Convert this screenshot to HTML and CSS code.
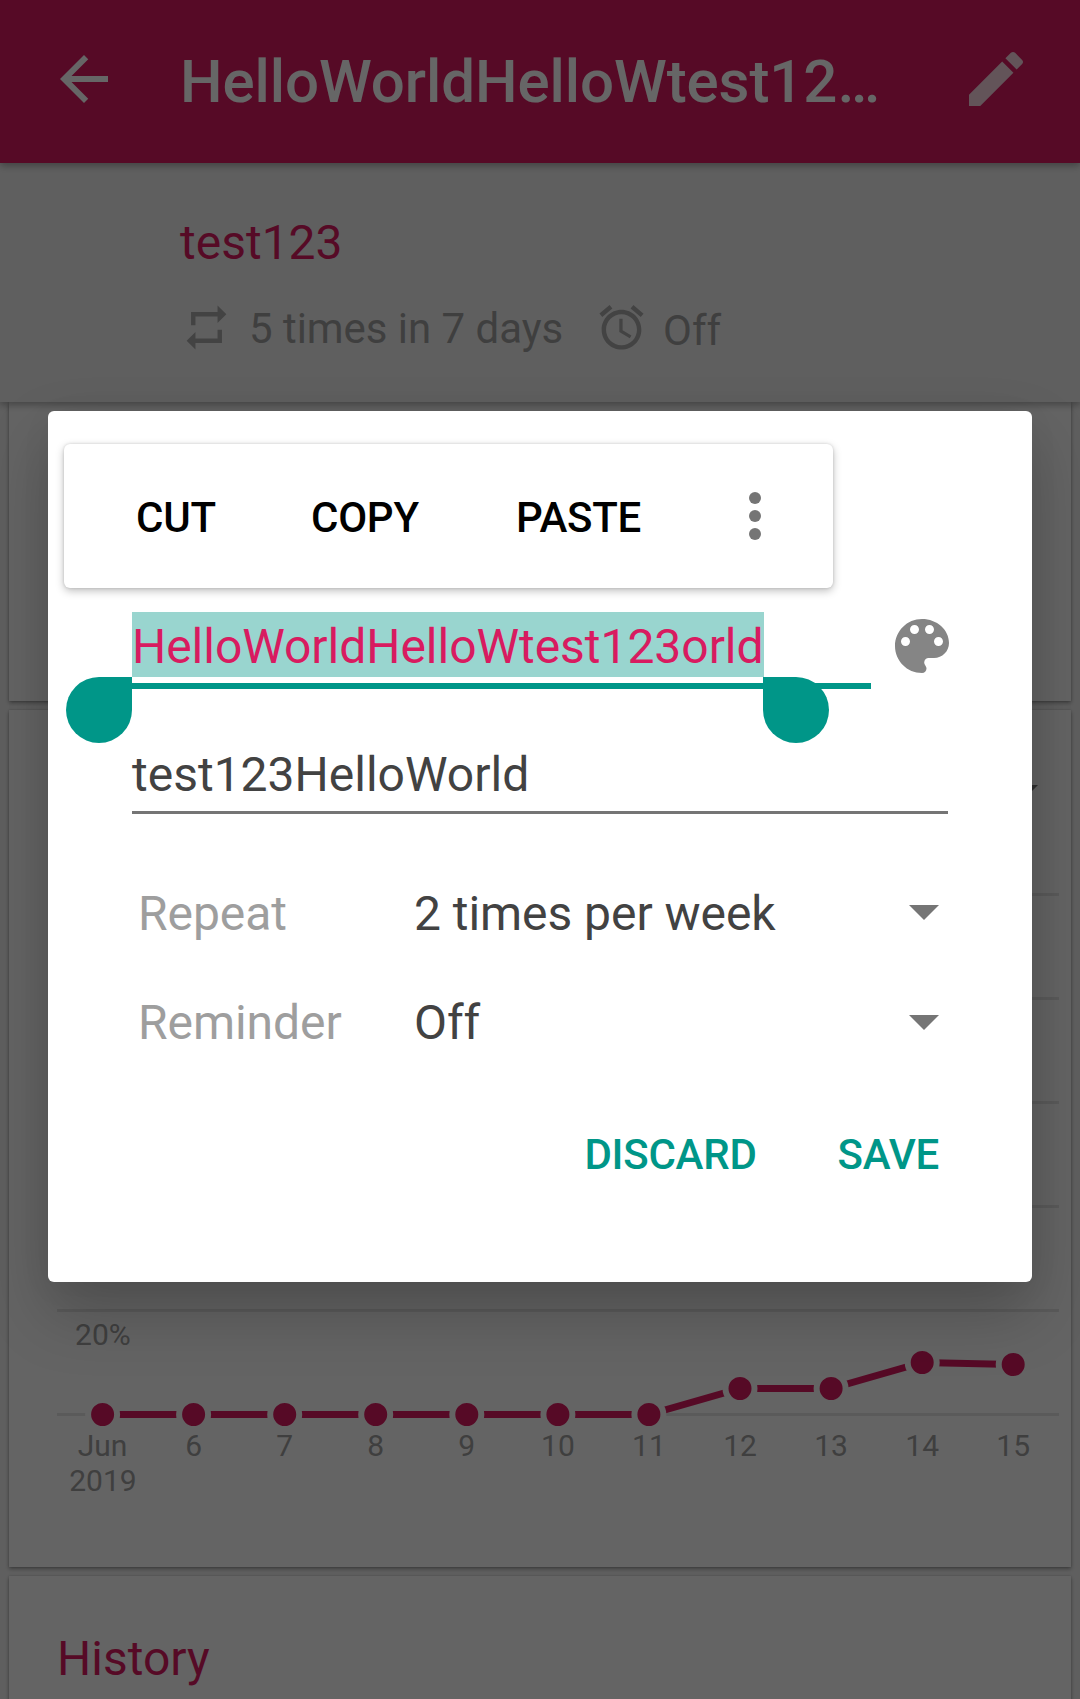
FILE: index.html
```html
<!DOCTYPE html>
<html lang="en">
<head>
<meta charset="utf-8">
<title>Habit details</title>
<link rel="stylesheet" href="styles.css">
</head>
<body>
<div class="screen">
  <header class="app-bar">
    <svg class="bar-icon" viewBox="0 0 24 24"><path d="M20 11H7.83l5.59-5.59L12 4l-8 8 8 8 1.41-1.41L7.83 13H20v-2z"/></svg>
    <h1 class="bar-title">HelloWorldHelloWtest12…</h1>
    <svg class="bar-icon bar-edit" viewBox="0 0 24 24"><path d="M3 17.25V21h3.75L17.81 9.94l-3.75-3.75L3 17.25zM20.71 7.04c.39-.39.39-1.02 0-1.41l-2.34-2.34c-.39-.39-1.02-.39-1.41 0l-1.83 1.83 3.75 3.75 1.83-1.83z"/></svg>
  </header>
  <section class="summary">
    <p class="question">test123</p>
    <div class="meta">
      <svg class="meta-icon" viewBox="0 0 24 24"><path d="M7 7h10v3l4-4-4-4v3H5v6h2V7zm10 10H7v-3l-4 4 4 4v-3h12v-6h-2v4z"/></svg>
      <span class="frequency">5 times in 7 days</span>
      <svg class="meta-icon" viewBox="0 0 24 24"><path d="M22 5.72l-4.6-3.86-1.29 1.53 4.6 3.86L22 5.72zM7.88 3.39L6.6 1.86 2 5.71l1.29 1.53 4.59-3.85zM12.5 8H11v6l4.75 2.85.75-1.23-4-2.37V8zM12 4c-4.97 0-9 4.03-9 9s4.02 9 9 9c4.97 0 9-4.03 9-9s-4.03-9-9-9zm0 16c-3.87 0-7-3.13-7-7s3.13-7 7-7 7 3.13 7 7-3.13 7-7 7z"/></svg>
      <span class="alarm">Off</span>
    </div>
  </section>
  <main class="cards">
    <section class="card card-overview"></section>
    <section class="card card-score">
      <div class="card-spinner"><span class="caret"></span></div>
      <svg class="chart" viewBox="9 880 1062 640">
        <g class="grid">
          <path d="M57 894.500H1059M57 998.500H1059M57 1102.500H1059M57 1206.500H1059M57 1310.500H1059M57 1414.500H1059"/>
        </g>
        <polyline class="trend" points="102.6,1414.5 193.6,1414.5 284.7,1414.5 375.7,1414.5 466.8,1414.5 557.9,1414.5 648.9,1414.5 740,1388.5 831.1,1388.5 922.2,1362.5 1013.2,1364.5"/>
        <g class="points">
          <circle cx="102.6" cy="1414.5" r="14.5"/><circle cx="193.6" cy="1414.5" r="14.5"/><circle cx="284.7" cy="1414.5" r="14.5"/><circle cx="375.7" cy="1414.5" r="14.5"/><circle cx="466.8" cy="1414.5" r="14.5"/><circle cx="557.9" cy="1414.5" r="14.5"/><circle cx="648.9" cy="1414.5" r="14.5"/><circle cx="740" cy="1388.5" r="14.5"/><circle cx="831.1" cy="1388.5" r="14.5"/><circle cx="922.2" cy="1362.5" r="14.5"/><circle cx="1013.2" cy="1364.5" r="14.5"/>
        </g>
        <g class="labels">
          <text x="102.9" y="1345">20%</text>
          <text x="102.6" y="1456">Jun</text><text x="102.9" y="1491">2019</text>
          <text x="193.6" y="1456">6</text><text x="284.7" y="1456">7</text><text x="375.7" y="1456">8</text><text x="466.8" y="1456">9</text><text x="557.9" y="1456">10</text><text x="648.9" y="1456">11</text><text x="740" y="1456">12</text><text x="831.1" y="1456">13</text><text x="922.2" y="1456">14</text><text x="1013.2" y="1456">15</text>
        </g>
      </svg>
    </section>
    <section class="card card-history"><h2 class="card-title">History</h2></section>
  </main>

  <div class="scrim">
    <div class="dialog">
      <div class="name-row">
        <div class="name-field">
          <span class="selection">HelloWorldHelloWtest123orld<i class="handle handle-start"></i><i class="handle handle-end"></i></span>
        </div>
        <svg class="palette" viewBox="0 0 24 24"><path d="M12 3c-4.97 0-9 4.03-9 9s4.03 9 9 9c.83 0 1.5-.67 1.5-1.5 0-.39-.15-.74-.39-1.01-.23-.26-.38-.61-.38-.99 0-.83.67-1.5 1.5-1.5H16c2.76 0 5-2.24 5-5 0-4.42-4.03-8-9-8zm-5.5 9c-.83 0-1.500-.67-1.500-1.500S5.670 9 6.500 9 8 9.670 8 10.500 7.330 12 6.500 12zm3-4C8.670 8 8 7.330 8 6.500S8.670 5 9.500 5s1.500.67 1.500 1.500S10.330 8 9.500 8zm5 0c-.83 0-1.500-.67-1.500-1.500S13.670 5 14.500 5s1.500.67 1.500 1.500S15.330 8 14.500 8zm3 4c-.83 0-1.500-.67-1.500-1.500S16.670 9 17.500 9s1.500.67 1.500 1.500-.67 1.500-1.500 1.500z"/></svg>
      </div>
      <div class="question-field">test123HelloWorld</div>
      <div class="option option-repeat"><span class="option-label">Repeat</span><span class="option-value">2 times per week</span><span class="caret"></span></div>
      <div class="option"><span class="option-label">Reminder</span><span class="option-value">Off</span><span class="caret"></span></div>
      <div class="actions"><span>DISCARD</span><span>SAVE</span></div>
      <div class="edit-menu">
        <span class="menu-cut">CUT</span><span class="menu-copy">COPY</span><span class="menu-paste">PASTE</span>
        <svg class="overflow" viewBox="0 0 12 48"><circle cx="6" cy="6" r="6"/><circle cx="6" cy="24" r="6"/><circle cx="6" cy="42" r="6"/></svg>
      </div>
    </div>
  </div>
</div>
</body>
</html>
```
FILE: styles.css
```css
* { box-sizing: border-box; margin: 0; padding: 0; }
body { background: #eee; font-family: Roboto, sans-serif; }
.screen { position: relative; width: 1080px; height: 1699px; overflow: hidden; background: #eee; }

/* App bar */
.app-bar {
  position: relative; z-index: 2;
  display: flex; align-items: center;
  height: 163px; padding: 0 48px 5px;
  background: #d81b60; box-shadow: 0 3px 7px rgba(0, 0, 0, .3);
}
.bar-icon { width: 72px; height: 72px; fill: #fff; flex: none; }
.bar-edit { opacity: .8; }
.bar-title {
  flex: 1; margin: 6px 0 0 60px;
  font-size: 60px; font-weight: 500; line-height: 72px; letter-spacing: -.07px; white-space: nowrap; color: #fff;
}

/* Habit summary */
.summary {
  position: relative; z-index: 1;
  height: 239px; padding: 52px 180px 0;
  background: #eee; box-shadow: 0 3px 7px rgba(0, 0, 0, .3);
}
.question { font-size: 48px; line-height: 56px; color: #d81b60; }
.meta { display: flex; align-items: flex-start; margin-top: 29px; font-size: 42px; line-height: 50px; color: #9e9e9e; }
.meta-icon { width: 53px; height: 53px; margin-top: 1px; fill: #a8a8a8; }
.frequency { width: 346px; margin: 4px 0 0 16px; letter-spacing: -.04px; white-space: nowrap; }
.alarm { margin: 6px 0 0 15px; }

/* Cards */
.cards { display: flex; flex-direction: column; gap: 9px; padding: 0 9px; }
.card { background: #fafafa; box-shadow: 0 2px 4px rgba(0, 0, 0, .35), 0 0 2px rgba(0, 0, 0, .15); }
.card-overview { height: 299px; }
.card-score { height: 857px; padding-top: 75px; }
.card-history { height: 300px; padding: 55px 48px; }
.card-title { font-size: 48px; font-weight: 400; line-height: 56px; color: #d81b60; }
.card-spinner { display: flex; justify-content: flex-end; height: 95px; padding-right: 33px; }
.caret { width: 30px; height: 15px; background: #757575; clip-path: polygon(0 0, 100% 0, 50% 100%); }
.chart { display: block; width: 1062px; height: 640px; }
.grid path { stroke: #e0e0e0; stroke-width: 3; }
.trend { fill: none; stroke: #d81b60; stroke-width: 7; }
.points circle { fill: #d81b60; stroke: #fafafa; stroke-width: 6; }
.labels { font-size: 30px; text-anchor: middle; fill: #9e9e9e; }

/* Edit dialog */
.scrim { position: absolute; inset: 0; z-index: 3; padding: 411px 48px 417px; background: rgba(0, 0, 0, .6); }
.dialog {
  position: relative; height: 871px; padding: 201px 84px 0; border-radius: 6px; background: #fff;
  box-shadow: 0 30px 64px rgba(0, 0, 0, .22), 0 6px 34px rgba(0, 0, 0, .04);
}
.name-row { display: flex; height: 77px; }
.name-field { flex: none; width: 739px; height: 77px; border-bottom: 6px solid #009688; }
.selection {
  position: relative; display: inline-block; height: 65px; padding-top: 7px;
  font-size: 48px; line-height: 56px; letter-spacing: -.04px; white-space: nowrap; color: #d81b60; background: #99d5cf;
}
.handle { position: absolute; top: 65px; width: 66px; height: 66px; background: #009688; }
.handle-start { right: 100%; border-radius: 33px 0 33px 33px; }
.handle-end { left: calc(100% - 1px); border-radius: 0 33px 33px 33px; }
.palette { width: 72px; height: 72px; margin: -2px 0 0 15px; fill: #858585; flex: none; }
.question-field {
  height: 76px; margin-top: 49px; padding-top: 9px; border-bottom: 3px solid #757575;
  font-size: 48px; line-height: 56px; color: #424242;
}
.option { display: flex; align-items: center; height: 56px; padding: 0 9px 0 6px; font-size: 48px; line-height: 56px; letter-spacing: -.05px; }
.option .caret { margin-bottom: 1px; }
.option-repeat { margin-top: 72px; }
.option-repeat .caret { margin-bottom: 3px; }
.option + .option { margin-top: 53px; }
.option-label { width: 276px; color: #9e9e9e; }
.option-value { flex: 1; color: #424242; }
.actions {
  display: flex; justify-content: flex-end; gap: 81px; margin-top: 79px; padding-right: 9px;
  font-size: 42px; font-weight: 500; line-height: 50px; letter-spacing: -.25px; color: #009688;
}

/* Text selection menu floating over the name field */
.edit-menu {
  position: absolute; top: 33px; left: 16px;
  display: flex; align-items: center; width: 769px; height: 144px; padding: 0 72px;
  border-radius: 6px; background: #fff;
  box-shadow: 0 3px 8px rgba(0, 0, 0, .25), 0 0 3px rgba(0, 0, 0, .15);
  font-size: 42px; font-weight: 500; line-height: 50px; letter-spacing: -.25px; color: #000;
}
.menu-cut, .menu-copy, .menu-paste { margin-top: 4px; }
.menu-cut { width: 175px; }
.menu-copy { width: 205px; }
.menu-paste { flex: 1; }
.overflow { width: 12px; height: 48px; fill: #757575; }
```
